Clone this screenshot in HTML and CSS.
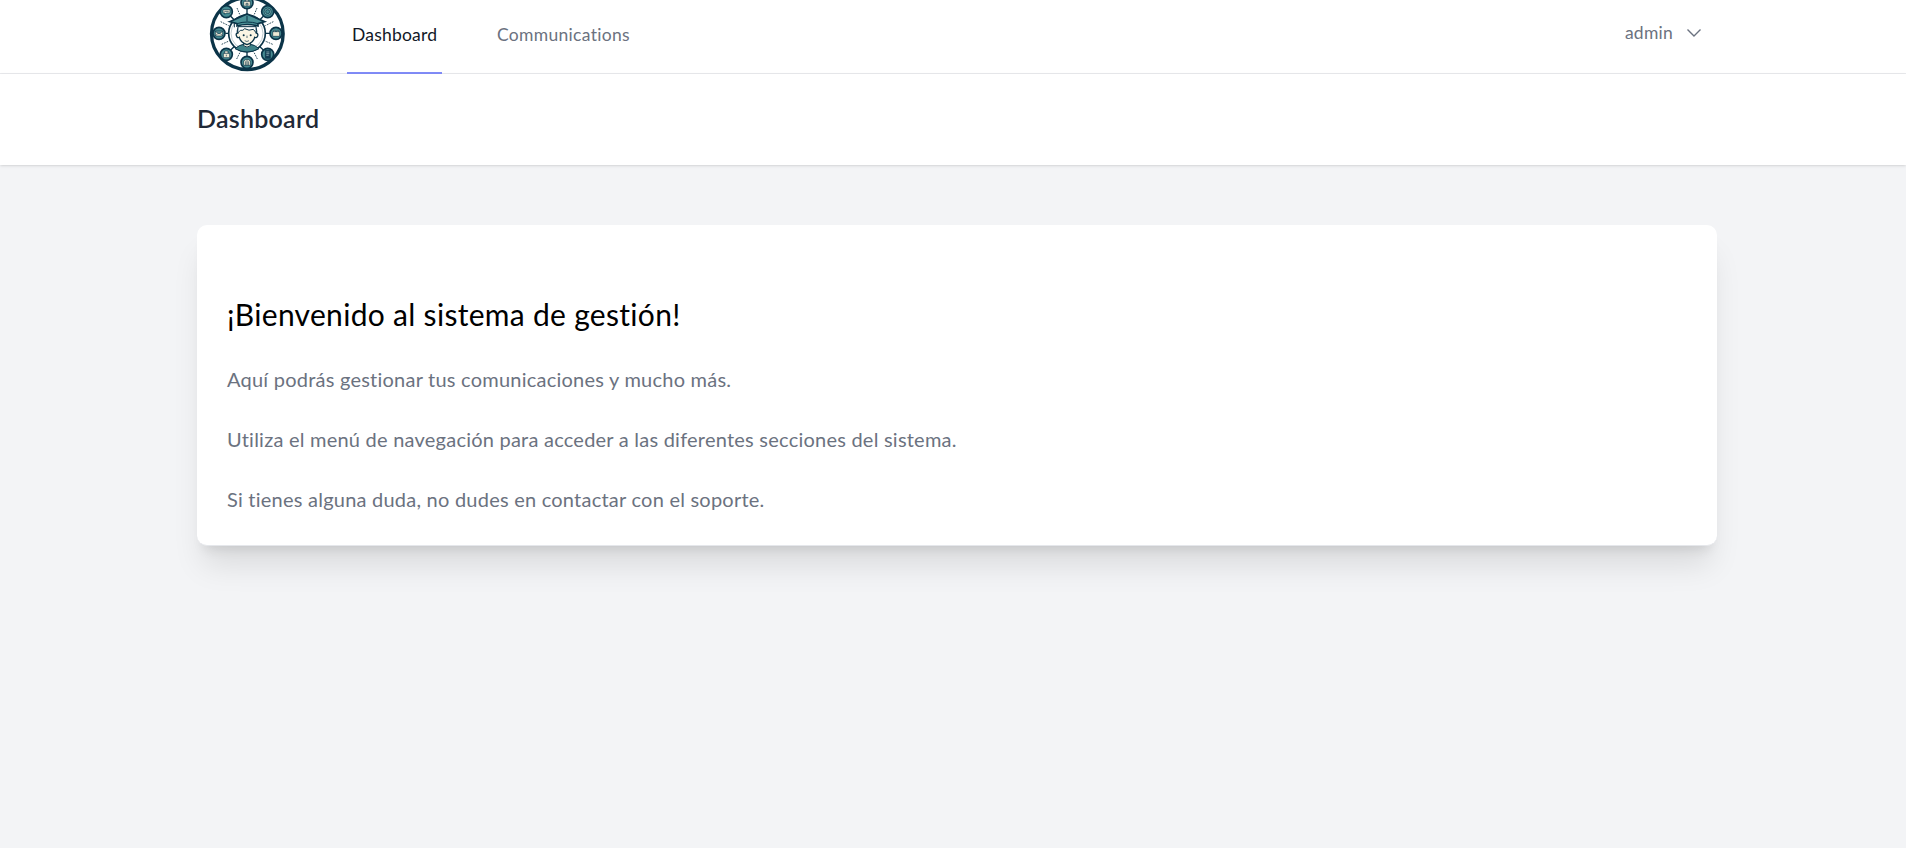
FILE: index.html
```html
<!DOCTYPE html>
<html lang="es">
<head>
<meta charset="utf-8">
<title>Dashboard</title>
<link rel="stylesheet" href="styles.css">
</head>
<body>
<nav class="nav">
  <div class="container nav-inner">
    <a class="logo" href="#">
      <svg viewBox="0 -24 285 240" width="95" height="80" fill="none" stroke="#0b3448" stroke-width="3">
        <circle cx="142" cy="101" r="107.500" fill="#fff" stroke-width="10"/>
        <path d="M141 27V50M141 148V169M76 100H90M192 100H210M92 49L103 60M190 49L179 60M92 150L107 136M190 150L175 136" stroke-width="4"/>
        <path d="M111 24L119 43M171 24L163 43M62 65L86 77M220 65L196 77M65 133L87 123M218 133L195 123M110 177L121 155M172 177L161 155" stroke-dasharray="5 3" stroke="#31515f"/>
        <circle cx="141" cy="100" r="55" fill="#fff" stroke-width="5"/>
        <circle cx="141" cy="100" r="48" stroke="#9fb1b5" stroke-width="2"/>
        <path d="M105 146Q119 134 131 133H151Q164 134 177 146Q141 166 105 146Z" fill="#3f8288"/>
        <path d="M131 126V137Q141 146 151 137V126" fill="#fbf5e4"/>
        <path d="M116 82Q110 94 113 99Q106 100 110 109Q113 115 118 112Q121 127 141 134Q161 127 164 112Q170 115 173 108Q175 100 169 99Q172 91 166 82Z" fill="#fbf5e4" stroke-width="4"/>
        <path d="M113 99L114 80H168L169 99L160 88Q147 94 134 86Q130 93 121 91Z" fill="#fff"/>
        <path d="M89 65L141 42L194 65L174 71V78Q141 69 111 78V71Z" fill="#4c9298" stroke-width="5"/>
        <path d="M111 71Q141 61 174 71M141 47V64M103 70V82"/>
        <circle cx="131" cy="106" r="3" fill="#0b3448" stroke="none"/>
        <circle cx="152" cy="106" r="3" fill="#0b3448" stroke="none"/>
        <path d="M141 107V114M134 122Q141 127 147 122" stroke-width="2"/>
        <g fill="#478b92" stroke-width="5">
          <circle cx="141" cy="8" r="18"/><circle cx="203" cy="35" r="18"/>
          <circle cx="228" cy="100" r="18"/><circle cx="203" cy="163" r="18"/>
          <circle cx="141" cy="187" r="18"/><circle cx="79" cy="163" r="18"/>
          <circle cx="57" cy="100" r="18"/><circle cx="79" cy="35" r="18"/>
        </g>
        <g fill="#eee9d5" stroke-width="2">
          <path d="M131 4H151V18H131ZM136 4V0H146V4M138 10H144V15H138Z"/>
          <path d="M69 29H90V39H79L75 43V39H69ZM73 34H86"/>
          <path d="M46 93H68V108H46ZM46 94L57 102L68 94M46 108L54 100M68 108L60 100"/>
          <path d="M218 95H239V109H218ZM221 95V91H226V95M231 95V91H236V95"/>
          <path d="M70 160H89V173H70ZM74 160V153H84V160M79 164V169"/>
          <path d="M131 183Q141 173 151 183V196H131ZM137 184V196M145 184V196M141 180V196"/>
          <path d="M196 151H211V175H196Z" fill="#173f55"/>
          <path d="M199 156H208M199 161H208M199 166H206" stroke="#a8c5c9"/>
          <circle cx="203" cy="35" r="11" fill="#70a8aa"/><circle cx="203" cy="35" r="6" fill="#478b92"/>
        </g>
      </svg>
    </a>
    <a class="link active" href="#">Dashboard</a>
    <a class="link communications" href="#">Communications</a>
    <button class="user">admin
      <svg viewBox="0 0 16 10" width="16" height="10" fill="none" stroke="#6b7280" stroke-width="1.4"><path d="M1.500 1.500L8 8L14.500 1.500"/></svg>
    </button>
  </div>
</nav>
<header class="header"><div class="container"><h2 class="heading">Dashboard</h2></div></header>
<main class="container main">
  <section class="card">
    <h1 class="title">¡Bienvenido al sistema de gestión!</h1>
    <p>Aquí podrás gestionar tus comunicaciones y mucho más.</p>
    <p>Utiliza el menú de navegación para acceder a las diferentes secciones del sistema.</p>
    <p>Si tienes alguna duda, no dudes en contactar con el soporte.</p>
  </section>
</main>
</body>
</html>
```
FILE: styles.css
```css
* { box-sizing: border-box; }
body { margin: 0; min-height: 848px; background: #f3f4f6; font-family: Lato, "Liberation Sans", sans-serif; font-size: 20px; line-height: 30px; font-variant-ligatures: none; color: #000; overflow: hidden; }
h1, h2, p { margin: 0; font-weight: 400; }
.container { width: 1520px; margin-left: 197px; }
.nav { height: 74px; background: #fff; border-bottom: 1px solid #e9eaed; }
.nav-inner { display: flex; height: 74px; align-items: flex-start; }
.logo { display: block; width: 95px; height: 74px; margin: 0 52px 0 3px; }
.logo svg { display: block; margin-top: -8px; }
.link { display: flex; height: 74px; width: 95px; padding: 22px 0 0 5px; margin-right: 50px; font-size: 17.5px; line-height: 26px; letter-spacing: 0.2px; color: #6b7280; text-decoration: none; white-space: nowrap; }
.communications { letter-spacing: 0.31px; }
.active { color: #111827; border-bottom: 2px solid #818cf8; }
.user { display: flex; align-items: center; gap: 13px; margin: 20px 15px 0 auto; padding: 0; height: 25px; border: 0; background: none; font: 17.5px/25px Lato, sans-serif; letter-spacing: 0.25px; color: #6b7280; }
.header { position: relative; height: 91px; padding-top: 29px; background: #fff; box-shadow: 0 1px 3px rgb(0 0 0 / 10%), 0 1px 2px -1px rgb(0 0 0 / 10%); }
.heading { font-size: 25px; line-height: 31px; font-weight: 600; letter-spacing: 0.25px; color: #1f2937; }
.main { padding-top: 60px; }
.card { height: 321px; padding: 69px 30px 0; background: #fff; border-bottom: 1px solid #e5e7eb; border-radius: 10px; box-shadow: 0 25px 31px -6px rgb(0 0 0 / 10%), 0 10px 12px -7px rgb(0 0 0 / 10%); }
.title { font-size: 30px; line-height: 40px; letter-spacing: 0.3px; }
.card p { margin-top: 30px; letter-spacing: 0.23px; color: #6b7280; }
```
